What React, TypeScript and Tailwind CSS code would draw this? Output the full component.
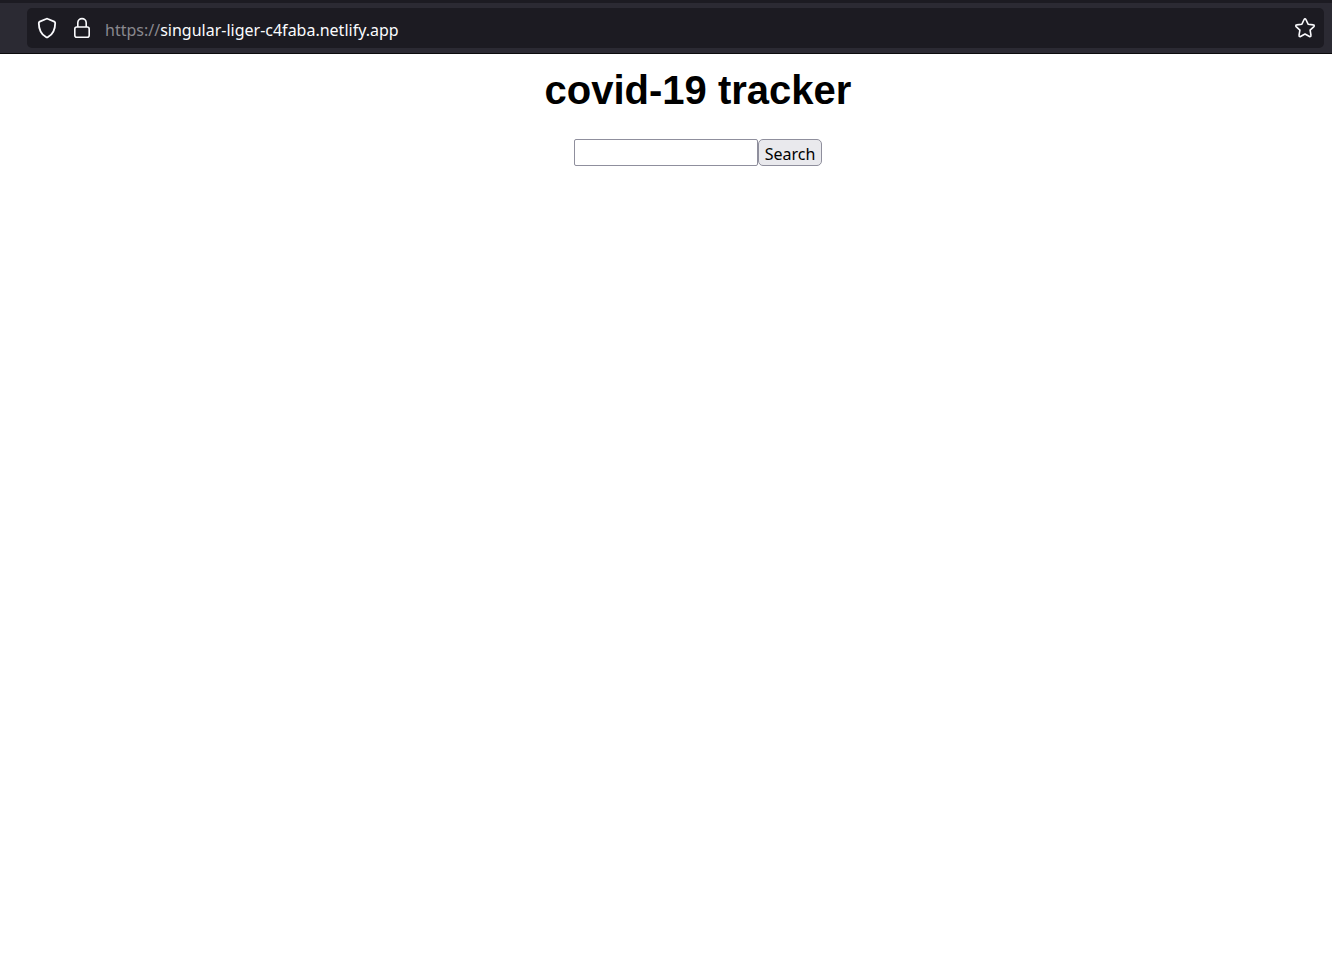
import { useState } from "react";

function ShieldIcon() {
  return (
    <svg width="20" height="22" viewBox="0 0 20 22" fill="none" stroke="#fbfbfe" strokeWidth="1.8" strokeLinejoin="round" aria-hidden="true">
      <path d="M10 1.7c.4 0 .7.1 1 .3l6.300 2.600c.6.300.9.700.9 1.300 0 6-2.200 11.200-7.200 14.200-.6.400-1.400.4-2 0C4 17.100 1.800 11.900 1.800 5.900c0-.6.300-1 .9-1.300L9 2c.3-.2.600-.3 1-.3z" />
    </svg>
  );
}

function LockIcon() {
  return (
    <svg width="18" height="22" viewBox="0 0 18 22" fill="none" stroke="#fbfbfe" strokeWidth="1.6" aria-hidden="true">
      <rect x="1.800" y="10" width="14.400" height="10.200" rx="2" />
      <path d="M4.800 10V5.800a4.200 4.200 0 0 1 8.400 0V10" />
    </svg>
  );
}

function StarIcon() {
  return (
    <svg width="22" height="22" viewBox="0 0 22 22" fill="none" stroke="#fbfbfe" strokeWidth="1.6" strokeLinejoin="round" aria-hidden="true">
      <path d="M10.100 2.500c.4-.8 1.400-.8 1.800 0l2.200 4.700 5.200.7c.9.100 1.200 1.100.6 1.700l-3.800 3.600.9 5.200c.2.900-.7 1.500-1.500 1.100L11 17l-4.500 2.500c-.8.400-1.700-.2-1.500-1.100l.9-5.200-3.800-3.600c-.6-.6-.3-1.600.6-1.700l5.200-.7z" />
    </svg>
  );
}

function AddressBar() {
  return (
    <header className="border-t-3 border-b border-t-[#1c1b22] border-b-[#0c0c0d] bg-[#2b2a33] py-[5px] pr-2 pl-[27px]">
      <div className="flex h-10 items-center rounded-[5px] bg-[#1c1b22] px-2">
        <button type="button" aria-label="Tracking protection" className="mr-4 ml-0.5">
          <ShieldIcon />
        </button>
        <button type="button" aria-label="Site information" className="mr-3.5">
          <LockIcon />
        </button>
        <a href="https://singular-liger-c4faba.netlify.app" className="mt-1 font-['Noto_Sans',sans-serif] text-[16px] leading-6 text-[#fbfbfe]">
          <span className="text-[#89888e]">https://</span>singular-liger-c4faba.netlify.app
        </a>
        <button type="button" aria-label="Bookmark this page" className="ml-auto">
          <StarIcon />
        </button>
      </div>
    </header>
  );
}

export default function App() {
  const [query, setQuery] = useState("");

  return (
    <div className="min-h-screen bg-white">
      <AddressBar />
      <main className="flex flex-col items-center pt-3 pl-16">
        <h1 className="font-['Liberation_Sans',Arial,sans-serif] text-[40px] leading-12 font-bold text-black">covid-19 tracker</h1>
        <form className="mt-[25px] flex" onSubmit={(e) => e.preventDefault()}>
          <input
            type="text"
            aria-label="Country"
            value={query}
            onChange={(e) => setQuery(e.target.value)}
            className="h-[27px] w-[184px] rounded-[2px] border border-[#8f8f9d] bg-white px-1 font-['Noto_Sans',sans-serif] text-[16px] text-black"
          />
          <button
            type="submit"
            className="h-[27px] w-16 rounded-[5px] border border-[#8f8f9d] bg-[#e9e9ed] pt-0.5 font-['Noto_Sans',sans-serif] text-[16px] leading-6 text-black"
          >
            Search
          </button>
        </form>
      </main>
    </div>
  );
}
